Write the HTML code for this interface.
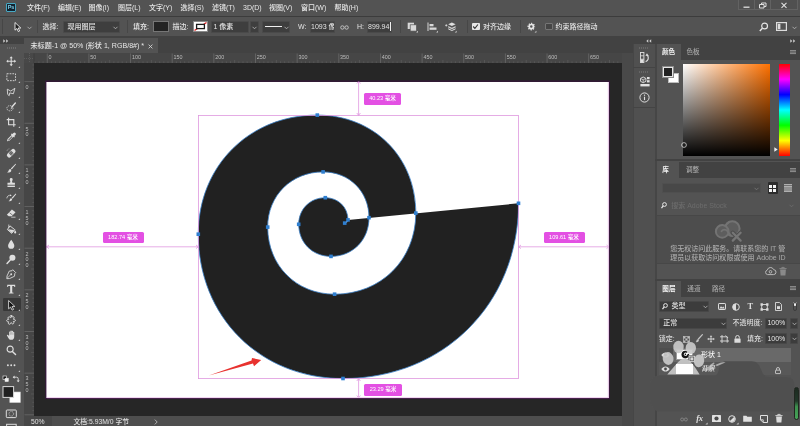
<!DOCTYPE html>
<html lang="zh-CN">
<head>
<meta charset="utf-8">
<title>Photoshop</title>
<style>
*{box-sizing:border-box;margin:0;padding:0}
html,body{width:800px;height:426px;overflow:hidden;background:#535353}
body{position:relative;font-family:"Liberation Sans","Noto Sans CJK SC",sans-serif;font-size:7px;color:#d6d6d6;line-height:1;font-weight:500}
.a{position:absolute}
.t{position:absolute;white-space:nowrap;line-height:10px;height:10px}
svg{position:absolute;overflow:visible}
.lab{height:11.5px;background:#e350e3;border-radius:1.5px;color:#fff;font-size:5.6px;line-height:11px;text-align:center;white-space:nowrap}
.m{top:2.5px;color:#e8e8e8}
.o{top:22px;color:#e4e4e4}
.fld{top:21px;height:11.5px;background:#3e3e3e;border:1px solid #4a4a4a;border-radius:1px}
.vs{top:20px;width:1px;height:13px;background:#474747}
.rl{font-size:5.4px;color:#bdbdbd;line-height:6px;height:6px}
</style>
</head>
<body>
<div id="root" style="position:absolute;left:0;top:0;width:800px;height:426px;opacity:0.999">
<!-- MENU BAR -->
<div class="a" id="menubar" style="left:0;top:0;width:800px;height:16px;background:#535353"></div>
<div class="a" style="left:0;top:16px;width:800px;height:1px;background:#3c3c3c"></div>
<!-- menu items -->
<div class="a" style="left:6px;top:3px;width:10px;height:9px;background:#12222f;border:1px solid #47a9c4;border-radius:1px;color:#7fd0ea;font-size:5.5px;line-height:7px;text-align:center;font-weight:bold;letter-spacing:-0.2px">Ps</div>
<div class="t m" style="left:27px">文件(F)</div>
<div class="t m" style="left:58px">编辑(E)</div>
<div class="t m" style="left:88.5px">图像(I)</div>
<div class="t m" style="left:118px">图层(L)</div>
<div class="t m" style="left:149px">文字(Y)</div>
<div class="t m" style="left:180.5px">选择(S)</div>
<div class="t m" style="left:212px">滤镜(T)</div>
<div class="t m" style="left:243px">3D(D)</div>
<div class="t m" style="left:269px">视图(V)</div>
<div class="t m" style="left:301px">窗口(W)</div>
<div class="t m" style="left:334.5px">帮助(H)</div>
<!-- window controls -->
<div class="a" style="left:738px;top:-1px;width:60px;height:11px;border:1px solid #626262;background:#505050"></div>
<div class="a" style="left:754px;top:0;width:1px;height:10px;background:#626262"></div>
<div class="a" style="left:770px;top:0;width:1px;height:10px;background:#626262"></div>
<svg width="60" height="11" style="left:738px;top:0" viewBox="738 0 60 11" fill="none" stroke="#e0e0e0" stroke-width="1">
<path d="M743.5 7.2h6" stroke-width="1.3"/>
<path d="M759.5 4.5h4.5v3.5h-4.5zM761.5 4.5v-1.5h4.5v3.5h-2"/>
<path d="M781.5 2.8l5 5M786.5 2.8l-5 5" stroke-width="1.1"/>
</svg>
<!-- OPTIONS BAR -->
<div class="a" id="optbar" style="left:0;top:17px;width:800px;height:19px;background:#535353"></div>
<!-- options bar content -->
<div class="a" style="left:2px;top:19px;width:1px;height:15px;background:#464646"></div>
<svg width="8" height="10" style="left:14px;top:22px" viewBox="0 0 8 10"><path d="M1 0.5V8.2L2.9 6.5L4.3 9.6L5.6 9L4.2 6L6.8 6Z" fill="#1c1c1c" stroke="#f2f2f2" stroke-width="0.9" stroke-linejoin="round"/></svg>
<svg width="5" height="4" style="left:27px;top:25.5px" viewBox="0 0 5 4"><path d="M0.5 0.8l2 2 2-2" fill="none" stroke="#bdbdbd" stroke-width="0.8"/></svg>
<div class="a vs" style="left:37px"></div>
<div class="t o" style="left:42.5px">选择:</div>
<div class="a fld" style="left:62.5px;width:57.5px"></div>
<div class="t o" style="left:67.5px">现用图层</div>
<svg width="5" height="4" style="left:113px;top:25.5px" viewBox="0 0 5 4"><path d="M0.5 0.8l2 2 2-2" fill="none" stroke="#bdbdbd" stroke-width="0.8"/></svg>
<div class="a vs" style="left:126.5px"></div>
<div class="t o" style="left:133px">填充:</div>
<div class="a" style="left:152.5px;top:20.5px;width:16px;height:11px;background:#232323;border:1px solid #767676"></div>
<div class="t o" style="left:172.5px">描边:</div>
<svg width="15" height="11" style="left:192.5px;top:20.5px" viewBox="0 0 15 11"><rect x="0.5" y="0.5" width="14" height="10" fill="#fff" stroke="#8a8a8a"/><path d="M1.5 9.5L13.5 1.5" stroke="#e02020" stroke-width="1.3"/><rect x="3.6" y="3.4" width="7.8" height="4.2" fill="#fff" stroke="#1c1c1c" stroke-width="1.3"/></svg>
<div class="a fld" style="left:211px;width:38px"></div>
<div class="t o" style="left:213.5px">1 像素</div>
<div class="a fld" style="left:250px;width:9px"></div>
<svg width="5" height="4" style="left:252px;top:25.5px" viewBox="0 0 5 4"><path d="M0.5 0.8l2 2 2-2" fill="none" stroke="#bdbdbd" stroke-width="0.8"/></svg>
<div class="a fld" style="left:262px;width:28px"></div>
<div class="a" style="left:264.5px;top:26px;width:17.5px;height:1.3px;background:#f0f0f0"></div>
<svg width="5" height="4" style="left:284px;top:25.5px" viewBox="0 0 5 4"><path d="M0.5 0.8l2 2 2-2" fill="none" stroke="#bdbdbd" stroke-width="0.8"/></svg>
<div class="t o" style="left:298px">W:</div>
<div class="a fld" style="left:309.5px;width:25px"></div>
<div class="t o" style="left:311px;width:23px;overflow:hidden">1093 像素</div>
<svg width="9" height="5" style="left:339.5px;top:24.5px" viewBox="0 0 9 5" fill="none" stroke="#c8c8c8" stroke-width="0.9"><circle cx="2.4" cy="2.5" r="1.7"/><circle cx="6.6" cy="2.5" r="1.7"/></svg>
<div class="t o" style="left:357px">H:</div>
<div class="a fld" style="left:367px;width:24.5px"></div>
<div class="t o" style="left:368px">899.94</div>
<div class="a" style="left:390px;top:22px;width:1px;height:9px;background:#f0f0f0"></div>
<div class="a vs" style="left:399.5px"></div>
<svg width="12" height="11" style="left:407px;top:21.5px" viewBox="0 0 12 11"><rect x="0.7" y="0.7" width="6.3" height="6.3" fill="#d8d8d8"/><rect x="3.2" y="2.8" width="6.3" height="6.3" fill="#d8d8d8" stroke="#535353" stroke-width="0.7"/><path d="M9.2 10.6h1.8v-1.8z" fill="#d8d8d8"/></svg>
<svg width="12" height="11" style="left:427px;top:21.5px" viewBox="0 0 12 11"><path d="M1 0.5v8.5" stroke="#d8d8d8" stroke-width="1"/><rect x="2.5" y="2" width="4" height="2.3" fill="#d8d8d8"/><rect x="2.5" y="5.5" width="7" height="2.3" fill="#d8d8d8"/><path d="M9.2 10.6h1.8v-1.8z" fill="#d8d8d8"/></svg>
<svg width="13" height="11" style="left:445px;top:21.5px" viewBox="0 0 13 11"><path d="M0.2 3.400h2.200M1.300 2.300v2.200" stroke="#e0e0e0" stroke-width="0.8"/><path d="M3.200 2.300l3.700-1.700 3.700 1.700-3.700 1.700z" fill="#e0e0e0"/><path d="M3.200 4.100l3.700 1.700 3.700-1.700v1.500l-3.700 1.700-3.700-1.700z" fill="#e0e0e0" opacity="0.85"/><path d="M3.200 6.800l3.700 1.700 3.700-1.700" fill="none" stroke="#e0e0e0" stroke-width="1"/><path d="M9.800 10.600h1.800v-1.800z" fill="#d8d8d8"/></svg>
<div class="a vs" style="left:467px"></div>
<div class="a" style="left:472px;top:22.5px;width:7.5px;height:7.5px;background:#e6e6e6;border-radius:1px"></div>
<svg width="7" height="7" style="left:472.3px;top:22.8px" viewBox="0 0 7 7"><path d="M1.2 3.5l1.7 1.8 3-3.8" fill="none" stroke="#333" stroke-width="1.1"/></svg>
<div class="t o" style="left:483px">对齐边缘</div>
<div class="a vs" style="left:519.5px"></div>
<svg width="10" height="11" style="left:527px;top:21.5px" viewBox="0 0 10 11"><circle cx="4.3" cy="4.6" r="3.1" fill="none" stroke="#e6e6e6" stroke-width="1.5" stroke-dasharray="1.22 1.215" stroke-dashoffset="0.6"/><circle cx="4.3" cy="4.6" r="2.1" fill="none" stroke="#e6e6e6" stroke-width="1.7"/><path d="M7.600 10.600h1.800v-1.800z" fill="#d8d8d8"/></svg>
<div class="a" style="left:545px;top:22.5px;width:7.5px;height:7.5px;background:#454545;border:1px solid #757575;border-radius:1px"></div>
<div class="t o" style="left:555.5px">约束路径拖动</div>
<svg width="10" height="10" style="left:759px;top:21.5px" viewBox="0 0 10 10" fill="none" stroke="#e4e4e4"><circle cx="5.6" cy="4" r="2.9" stroke-width="1.2"/><path d="M3.4 6.2L0.8 8.9" stroke-width="1.5"/></svg>
<svg width="11" height="9" style="left:776px;top:22px" viewBox="0 0 11 9"><rect x="0.6" y="0.6" width="9.8" height="7.8" fill="none" stroke="#dcdcdc" stroke-width="1.2"/><rect x="1.8" y="1.8" width="2.6" height="5.4" fill="#dcdcdc"/></svg>
<svg width="5" height="4" style="left:791.5px;top:25.5px" viewBox="0 0 5 4"><path d="M0.5 0.8l2 2 2-2" fill="none" stroke="#bdbdbd" stroke-width="0.8"/></svg>
<!-- dark band -->
<div class="a" style="left:0;top:36px;width:800px;height:8px;background:#424242"></div>
<!-- LEFT TOOLBAR -->
<div class="a" id="toolbar" style="left:0;top:43px;width:24px;height:383px;background:#535353"></div>
<!-- tools -->
<div class="a" style="left:0;top:36px;width:24px;height:8px;background:#424242"></div>
<svg width="6" height="4" style="left:2.5px;top:38.5px" viewBox="0 0 6 4"><path d="M0.3 0.3l2 1.7-2 1.7zM3.2 0.3l2 1.7-2 1.7z" fill="#d0d0d0"/></svg>
<div class="a" style="left:7px;top:47px;width:10px;height:2px;background:repeating-linear-gradient(90deg,#6a6a6a 0 1px,transparent 1px 2px)"></div>
<svg width="10.4" height="10.4" style="left:6px;top:56.3px" viewBox="0 0 12 12"><path d="M6 0.3l1.9 2.2h-1.3v2.9h2.9v-1.3l2.2 1.9-2.2 1.9v-1.3h-2.9v2.9h1.3l-1.9 2.2-1.9-2.2h1.3v-2.9h-2.9v1.3l-2.2-1.9 2.2-1.9v1.3h2.9v-2.9h-1.3z" fill="#dedede"/></svg>
<svg width="2.4" height="2.4" style="left:18px;top:65.5px" viewBox="0 0 3 3"><path d="M2.6 0.4v2.2h-2.2z" fill="#c4c4c4"/></svg>
<svg width="10.4" height="10.4" style="left:6px;top:71.5px" viewBox="0 0 12 12"><rect x="1" y="2" width="10" height="8" fill="none" stroke="#dedede" stroke-width="1" stroke-dasharray="2 1.2"/></svg>
<svg width="2.4" height="2.4" style="left:18px;top:80.7px" viewBox="0 0 3 3"><path d="M2.6 0.4v2.2h-2.2z" fill="#c4c4c4"/></svg>
<svg width="10.4" height="10.4" style="left:6px;top:86.7px" viewBox="0 0 12 12"><path d="M1.5 2.5l4 2.2 4.8-3.2-1.8 6.3-4.2-1 -0.6 3.2 -1.8-1.5z" fill="none" stroke="#dedede" stroke-width="1" stroke-linejoin="round"/></svg>
<svg width="2.4" height="2.4" style="left:18px;top:95.9px" viewBox="0 0 3 3"><path d="M2.6 0.4v2.2h-2.2z" fill="#c4c4c4"/></svg>
<svg width="10.4" height="10.4" style="left:6px;top:101.9px" viewBox="0 0 12 12"><ellipse cx="4.6" cy="7.2" rx="3.6" ry="3" fill="none" stroke="#dedede" stroke-width="0.9" stroke-dasharray="1.6 0.9"/><path d="M10.8 1.2l-4 4.6" stroke="#dedede" stroke-width="1.6" stroke-linecap="round"/><path d="M6.6 6l-1.6 2.6 2.6-1.6z" fill="#dedede"/></svg>
<svg width="2.4" height="2.4" style="left:18px;top:111.1px" viewBox="0 0 3 3"><path d="M2.6 0.4v2.2h-2.2z" fill="#c4c4c4"/></svg>
<svg width="10.4" height="10.4" style="left:6px;top:117.1px" viewBox="0 0 12 12"><path d="M3 0.8v8.2h8.2M0.8 3h8.2v8.2" fill="none" stroke="#dedede" stroke-width="1.3"/></svg>
<svg width="2.4" height="2.4" style="left:18px;top:126.3px" viewBox="0 0 3 3"><path d="M2.6 0.4v2.2h-2.2z" fill="#c4c4c4"/></svg>
<svg width="10.4" height="10.4" style="left:6px;top:132.3px" viewBox="0 0 12 12"><path d="M10.9 1.1a1.6 1.6 0 0 0-2.3 0l-1.3 1.3-0.7-0.7-1 1 0.8 0.8-4.6 4.6-0.6 2.4 0.3 0.3 2.4-0.6 4.6-4.6 0.8 0.8 1-1-0.7-0.7 1.3-1.3a1.6 1.6 0 0 0 0-2.3z" fill="#dedede"/><path d="M6.6 5l-3.9 3.9-0.3 1 1-0.3 3.9-3.9z" fill="#535353"/></svg>
<svg width="2.4" height="2.4" style="left:18px;top:141.5px" viewBox="0 0 3 3"><path d="M2.6 0.4v2.2h-2.2z" fill="#c4c4c4"/></svg>
<svg width="10.4" height="10.4" style="left:6px;top:147.5px" viewBox="0 0 12 12"><g transform="rotate(-45 6 6)"><rect x="0.2" y="3.4" width="11.6" height="5.2" rx="2.3" fill="#dedede"/><rect x="4" y="4" width="4" height="4" fill="#535353"/><circle cx="5.1" cy="5.1" r="0.5" fill="#dedede"/><circle cx="6.9" cy="5.1" r="0.5" fill="#dedede"/><circle cx="5.1" cy="6.9" r="0.5" fill="#dedede"/><circle cx="6.9" cy="6.9" r="0.5" fill="#dedede"/></g><path d="M1.2 3.5a3 3 0 0 1 3-2.6" fill="none" stroke="#dedede" stroke-width="0.6" stroke-dasharray="0.8 0.6"/></svg>
<svg width="2.4" height="2.4" style="left:18px;top:156.7px" viewBox="0 0 3 3"><path d="M2.6 0.4v2.2h-2.2z" fill="#c4c4c4"/></svg>
<svg width="10.4" height="10.4" style="left:6px;top:162.7px" viewBox="0 0 12 12"><path d="M11 0.8l-5.4 5.6 1 1 5-6z" fill="#dedede"/><path d="M5.1 6.9c-1.6 0.1-1.9 1.3-2.2 2.3-0.2 0.8-0.9 1.2-1.7 1.5 1.6 0.5 3.6 0.2 4.5-0.9 0.6-0.8 0.6-1.8-0.6-2.9z" fill="#dedede"/></svg>
<svg width="2.4" height="2.4" style="left:18px;top:171.9px" viewBox="0 0 3 3"><path d="M2.6 0.4v2.2h-2.2z" fill="#c4c4c4"/></svg>
<svg width="10.4" height="10.4" style="left:6px;top:177.9px" viewBox="0 0 12 12"><path d="M4.3 1.8a1.7 1.7 0 1 1 3.4 0c0 1-0.7 1.6-0.7 2.6 0 0.8 0.5 1.2 1.6 1.2h1.7v2.2h-8.6v-2.2h1.7c1.1 0 1.6-0.4 1.6-1.2 0-1-0.7-1.6-0.7-2.6z" fill="#dedede"/><rect x="1.7" y="8.8" width="8.6" height="1.6" fill="#dedede"/></svg>
<svg width="2.4" height="2.4" style="left:18px;top:187.1px" viewBox="0 0 3 3"><path d="M2.6 0.4v2.2h-2.2z" fill="#c4c4c4"/></svg>
<svg width="10.4" height="10.4" style="left:6px;top:193.1px" viewBox="0 0 12 12"><path d="M11.2 0.6l-4.6 5 0.9 0.9 4.3-5.2z" fill="#dedede"/><path d="M6.2 6c-1.4 0.1-1.7 1.1-1.9 2-0.2 0.7-0.8 1.1-1.5 1.3 1.4 0.4 3.1 0.2 3.9-0.8 0.6-0.7 0.5-1.6-0.5-2.5z" fill="#dedede"/><path d="M1 6.2a3.4 3.4 0 0 1 4.6-3.3" fill="none" stroke="#dedede" stroke-width="0.9"/><path d="M5 1.5l1.6 1.7-2.2 0.6z" fill="#dedede"/></svg>
<svg width="2.4" height="2.4" style="left:18px;top:202.3px" viewBox="0 0 3 3"><path d="M2.6 0.4v2.2h-2.2z" fill="#c4c4c4"/></svg>
<svg width="10.4" height="10.4" style="left:6px;top:208.3px" viewBox="0 0 12 12"><path d="M6.8 1.6l4.2 3.2-4.4 4.8h-3.4l-2.2-1.7z" fill="#dedede"/><path d="M4.2 5.6l3.6 2.8" stroke="#535353" stroke-width="0.8"/><path d="M6 10.6h5" stroke="#dedede" stroke-width="0.9"/></svg>
<svg width="2.4" height="2.4" style="left:18px;top:217.5px" viewBox="0 0 3 3"><path d="M2.6 0.4v2.2h-2.2z" fill="#c4c4c4"/></svg>
<svg width="10.4" height="10.4" style="left:6px;top:223.5px" viewBox="0 0 12 12"><path d="M4.6 2.2l5.6 4.4-3.6 4.2-5-4.4z" fill="none" stroke="#dedede" stroke-width="1.1" stroke-linejoin="round"/><path d="M2.2 6.2l7.4 0.6-3 3.6z" fill="#dedede"/><path d="M3.2 0.6v4.2" stroke="#dedede" stroke-width="0.9"/><path d="M10.6 7.2c0.8 1.3 1.2 2 1.2 2.7a1.2 1.2 0 0 1-2.4 0c0-0.7 0.4-1.4 1.2-2.7z" fill="#dedede"/></svg>
<svg width="2.4" height="2.4" style="left:18px;top:232.7px" viewBox="0 0 3 3"><path d="M2.6 0.4v2.2h-2.2z" fill="#c4c4c4"/></svg>
<svg width="10.4" height="10.4" style="left:6px;top:238.7px" viewBox="0 0 12 12"><path d="M6 0.8c2.2 3.2 3.6 5 3.6 6.9a3.6 3.6 0 0 1-7.2 0c0-1.9 1.4-3.7 3.6-6.9z" fill="#dedede"/></svg>
<svg width="2.4" height="2.4" style="left:18px;top:247.9px" viewBox="0 0 3 3"><path d="M2.6 0.4v2.2h-2.2z" fill="#c4c4c4"/></svg>
<svg width="10.4" height="10.4" style="left:6px;top:253.9px" viewBox="0 0 12 12"><circle cx="7.4" cy="4.3" r="3.5" fill="#dedede"/><path d="M4.9 6.9l-3.7 4" stroke="#dedede" stroke-width="1.7" stroke-linecap="round"/></svg>
<svg width="2.4" height="2.4" style="left:18px;top:263.1px" viewBox="0 0 3 3"><path d="M2.6 0.4v2.2h-2.2z" fill="#c4c4c4"/></svg>
<svg width="10.4" height="10.4" style="left:6px;top:269.1px" viewBox="0 0 12 12"><path d="M7.8 0.8l3.4 3.4-1 1-0.4 3.2-5.6 2.6-3.2 0.2 0.2-3.2 2.6-5.6 3.2-0.4z" fill="none" stroke="#dedede" stroke-width="1" stroke-linejoin="round"/><path d="M1.2 10.8l4.2-4.2" stroke="#dedede" stroke-width="0.8"/><circle cx="6" cy="6" r="1.1" fill="#dedede"/></svg>
<svg width="2.4" height="2.4" style="left:18px;top:278.3px" viewBox="0 0 3 3"><path d="M2.6 0.4v2.2h-2.2z" fill="#c4c4c4"/></svg>
<svg width="10.4" height="10.4" style="left:6px;top:284.3px" viewBox="0 0 12 12"><path d="M1.4 1h9.2v2.6h-0.9l-0.4-1.3h-2.1v7.6l1.5 0.3v0.8h-5.4v-0.8l1.5-0.3v-7.6h-2.1l-0.4 1.3h-0.9z" fill="#dedede"/></svg>
<svg width="2.4" height="2.4" style="left:18px;top:293.5px" viewBox="0 0 3 3"><path d="M2.6 0.4v2.2h-2.2z" fill="#c4c4c4"/></svg>
<div class="a" style="left:2.5px;top:297.9px;width:18px;height:13.5px;background:#383838;border-radius:1px"></div>
<svg width="10.4" height="10.4" style="left:6px;top:299.5px" viewBox="0 0 12 12"><path d="M3 0.6v9.6l2.3-2.1 1.7 3.6 1.7-0.8-1.7-3.5h3.2z" fill="#111" stroke="#f0f0f0" stroke-width="0.9" stroke-linejoin="round"/></svg>
<svg width="2.4" height="2.4" style="left:18px;top:308.7px" viewBox="0 0 3 3"><path d="M2.6 0.4v2.2h-2.2z" fill="#c4c4c4"/></svg>
<svg width="10.4" height="10.4" style="left:6px;top:314.7px" viewBox="0 0 12 12"><path d="M5.2 0.8c1 0 1.4 0.9 1.4 1.7 0.8-0.7 2-0.9 2.6-0.1 0.6 0.8 0 1.8-0.8 2.4 1.1 0 2.4 0.4 2.4 1.5 0 1-1.2 1.3-2.3 1.2 0.6 0.8 0.9 2-0.1 2.6-1 0.6-1.9-0.3-2.4-1.3-0.4 1-1.3 2.2-2.5 1.8-1.1-0.4-0.9-1.7-0.3-2.7-1 0.1-2.3-0.2-2.4-1.3-0.1-1.1 1.2-1.6 2.3-1.5-0.7-0.8-1.1-2-0.3-2.7 0.8-0.7 1.8-0.1 2.5 0.7 0-1 0.5-2.3 1.9-2.3z" fill="none" stroke="#dedede" stroke-width="1.1" stroke-linejoin="round"/></svg>
<svg width="2.4" height="2.4" style="left:18px;top:323.9px" viewBox="0 0 3 3"><path d="M2.6 0.4v2.2h-2.2z" fill="#c4c4c4"/></svg>
<svg width="10.4" height="10.4" style="left:6px;top:329.9px" viewBox="0 0 12 12"><path d="M3.6 6.6v-4.2a0.75 0.75 0 0 1 1.5 0v-1a0.75 0.75 0 0 1 1.5 0v0.3a0.75 0.75 0 0 1 1.5 0v1a0.7 0.7 0 0 1 1.4 0v5c0 2.2-1.2 3.6-3.4 3.6-1.8 0-2.6-0.8-3.4-2.2l-1.6-2.8c-0.3-0.6 0.5-1.1 1-0.6z" fill="#dedede"/><path d="M5.1 2.5v3M6.6 1.8v3.6M8.1 2.8v2.8" stroke="#535353" stroke-width="0.35"/></svg>
<svg width="2.4" height="2.4" style="left:18px;top:339.1px" viewBox="0 0 3 3"><path d="M2.6 0.4v2.2h-2.2z" fill="#c4c4c4"/></svg>
<svg width="10.4" height="10.4" style="left:6px;top:345.1px" viewBox="0 0 12 12"><circle cx="4.8" cy="4.8" r="3.5" fill="none" stroke="#dedede" stroke-width="1.3"/><path d="M7.4 7.4l3.6 3.6" stroke="#dedede" stroke-width="1.7" stroke-linecap="round"/></svg>
<svg width="10.4" height="10.4" style="left:6px;top:360.3px" viewBox="0 0 12 12"><circle cx="2.2" cy="6" r="1.1" fill="#dedede"/><circle cx="6" cy="6" r="1.1" fill="#dedede"/><circle cx="9.8" cy="6" r="1.1" fill="#dedede"/></svg>
<svg width="2.4" height="2.4" style="left:18px;top:369.5px" viewBox="0 0 3 3"><path d="M2.6 0.4v2.2h-2.2z" fill="#c4c4c4"/></svg>
<svg width="24" height="52" style="left:0;top:374px" viewBox="0 374 24 52">
<rect x="3" y="376" width="3.6" height="3.6" fill="#111" stroke="#e6e6e6" stroke-width="0.7"/><rect x="5" y="378.2" width="3.4" height="3.4" fill="#f2f2f2" stroke="#e6e6e6" stroke-width="0.5"/>
<path d="M13.4 377.2h3.2a1.6 1.6 0 0 1 1.6 1.6v2.4" fill="none" stroke="#e0e0e0" stroke-width="0.9"/><path d="M14.6 375.6l-1.9 1.6 1.9 1.6zM16.6 380.4l1.6 1.9 1.6-1.9z" fill="#e0e0e0"/>
<rect x="9.8" y="392" width="10.6" height="10.6" fill="#fff" stroke="#c9c9c9" stroke-width="0.6"/>
<rect x="3" y="386.6" width="10.6" height="10.8" fill="#202020" stroke="#d9d9d9" stroke-width="1"/>
<rect x="6.3" y="410" width="10" height="7.6" rx="0.8" fill="none" stroke="#dcdcdc" stroke-width="1"/><circle cx="11.3" cy="413.8" r="2.3" fill="none" stroke="#dcdcdc" stroke-width="0.7" stroke-dasharray="0.9 0.6"/>
<rect x="6.6" y="424.3" width="9.6" height="3" fill="none" stroke="#dcdcdc" stroke-width="1"/>
</svg>
<!-- DOC AREA -->
<div class="a" id="docarea" style="left:24px;top:38px;width:609px;height:388px;background:#424242"></div>
<div class="a" id="tab" style="left:24px;top:38px;width:134px;height:15px;background:#535353"></div>
<div class="a" id="hruler" style="left:24px;top:53px;width:598px;height:10px;background:#464646"></div>
<div class="a" id="vruler" style="left:24px;top:63px;width:10px;height:353px;background:#464646"></div>
<div class="a" id="surround" style="left:34px;top:63px;width:588px;height:353px;background:#262626"></div>
<div class="a" id="canvas" style="left:46.4px;top:81.6px;width:562.4px;height:316.5px;background:#fff"></div>
<!-- CANVAS GRAPHICS -->
<svg id="art" width="800" height="426" viewBox="0 0 800 426" style="left:0;top:0">
<path fill="#212121" fill-rule="evenodd" d="M518.5 203.3 C518.5 303.7 443.6 378.5 343.0 378.5 C260.1 378.5 198.3 316.9 198.3 234.2 C198.3 166.0 249.1 115.1 317.3 115.1 C373.7 115.1 415.8 156.9 415.8 213.1 C415.8 259.6 381.1 294.2 334.6 294.2 C296.3 294.2 267.7 265.5 267.7 227.1 C267.7 195.5 291.4 171.9 323.1 171.9 C349.4 171.9 369.0 191.5 369.0 217.7 C369.0 239.9 352.8 256.4 331.0 256.4 C312.5 256.4 298.7 242.7 298.7 224.3 C298.7 209.1 310.1 197.7 325.3 197.7 C338.3 197.7 348.0 207.2 348.0 219.9 C348.0 221.7 346.6 223.1 344.7 223.1 L348 219.9Z"/><path fill="none" stroke="#3a7fc6" stroke-width="0.8" d="M518.5 203.3 C518.5 303.7 443.6 378.5 343.0 378.5 C260.1 378.5 198.3 316.9 198.3 234.2 C198.3 166.0 249.1 115.1 317.3 115.1 C373.7 115.1 415.8 156.9 415.8 213.1 C415.8 259.6 381.1 294.2 334.6 294.2 C296.3 294.2 267.7 265.5 267.7 227.1 C267.7 195.5 291.4 171.9 323.1 171.9 C349.4 171.9 369.0 191.5 369.0 217.7 C369.0 239.9 352.8 256.4 331.0 256.4 C312.5 256.4 298.7 242.7 298.7 224.3 C298.7 209.1 310.1 197.7 325.3 197.7 C338.3 197.7 348.0 207.2 348.0 219.9 C348.0 221.7 346.6 223.1 344.7 223.1"/>
<g fill="none" stroke="#df98df" stroke-width="0.8">
<rect x="198.4" y="115.4" width="320.2" height="263.2"/>
<path d="M46.5 246.8H198.4M518.6 246.8H609M358.6 81V115.4M358.6 378.6V398"/>
<path d="M49 245l-2.5 1.8 2.5 1.8M196 245l2.4 1.8-2.4 1.8M521 245l-2.4 1.8 2.4 1.8M606.5 245l2.4 1.8-2.4 1.8M356.8 83.5l1.8-2.5 1.8 2.5M356.8 113l1.8 2.4 1.8-2.4M356.8 381l1.8-2.4 1.8 2.4M356.8 395.5l1.8 2.4 1.8-2.4"/>
</g>
<rect x="45.9" y="81.1" width="563.4" height="317.5" fill="none" stroke="#3b1542" stroke-width="1"/><path d="M608.3 82v315.600H47" fill="none" stroke="#ecc9ec" stroke-width="0.9"/>
<g fill="#2f7fd0"><rect x="516.7" y="201.5" width="3.6" height="3.6"/><rect x="341.2" y="376.7" width="3.6" height="3.6"/><rect x="196.5" y="232.4" width="3.6" height="3.6"/><rect x="315.5" y="113.3" width="3.6" height="3.6"/><rect x="414.0" y="211.3" width="3.6" height="3.6"/><rect x="332.8" y="292.4" width="3.6" height="3.6"/><rect x="265.9" y="225.3" width="3.6" height="3.6"/><rect x="321.3" y="170.1" width="3.6" height="3.6"/><rect x="367.2" y="215.9" width="3.6" height="3.6"/><rect x="329.2" y="254.6" width="3.6" height="3.6"/><rect x="296.9" y="222.5" width="3.6" height="3.6"/><rect x="323.5" y="195.9" width="3.6" height="3.6"/><rect x="346.2" y="218.1" width="3.6" height="3.6"/><rect x="342.9" y="221.3" width="3.6" height="3.6"/></g>
<path d="M208.8 375.6L251.5 360.6L252 358L261.2 360L254 366.3L253 363.6Z" fill="#e8322f"/>
</svg>
<div class="a lab" style="left:364px;top:93px;width:37px">40.23 毫米</div>
<div class="a lab" style="left:102.5px;top:231.5px;width:41px">182.74 毫米</div>
<div class="a lab" style="left:543.5px;top:231.5px;width:41px">109.61 毫米</div>
<div class="a lab" style="left:364px;top:384px;width:38px">23.29 毫米</div>
<div class="a" id="statusbar" style="left:24px;top:416px;width:598px;height:10px;background:#4e4e4e"></div>
<!-- rulers -->
<svg width="598" height="10" style="left:24px;top:53px" viewBox="24 53 598 10"><rect x="24" y="53" width="10" height="10" fill="#484848"/><path d="M24 58.5h10M29.5 53v10" stroke="#6a6a6a" stroke-width="0.6" stroke-dasharray="1 1"/><path d="M47.25 53.5V63M88.90 53.5V63M130.55 53.5V63M172.20 53.5V63M213.85 53.5V63M255.50 53.5V63M297.15 53.5V63M338.80 53.5V63M380.45 53.5V63M422.10 53.5V63M463.75 53.5V63M505.40 53.5V63M547.05 53.5V63M588.70 53.5V63" stroke="#6f6f6f" stroke-width="0.7"/><path d="M34.76 61.3V63M38.92 61.3V63M43.09 61.3V63M51.41 61.3V63M55.58 61.3V63M59.74 61.3V63M63.91 61.3V63M68.08 60V63M72.24 61.3V63M76.41 61.3V63M80.57 61.3V63M84.73 61.3V63M93.06 61.3V63M97.23 61.3V63M101.39 61.3V63M105.56 61.3V63M109.72 60V63M113.89 61.3V63M118.05 61.3V63M122.22 61.3V63M126.39 61.3V63M134.72 61.3V63M138.88 61.3V63M143.04 61.3V63M147.21 61.3V63M151.38 60V63M155.54 61.3V63M159.70 61.3V63M163.87 61.3V63M168.03 61.3V63M176.36 61.3V63M180.53 61.3V63M184.69 61.3V63M188.86 61.3V63M193.03 60V63M197.19 61.3V63M201.35 61.3V63M205.52 61.3V63M209.69 61.3V63M218.01 61.3V63M222.18 61.3V63M226.34 61.3V63M230.51 61.3V63M234.68 60V63M238.84 61.3V63M243.00 61.3V63M247.17 61.3V63M251.33 61.3V63M259.67 61.3V63M263.83 61.3V63M268.00 61.3V63M272.16 61.3V63M276.32 60V63M280.49 61.3V63M284.65 61.3V63M288.82 61.3V63M292.99 61.3V63M301.31 61.3V63M305.48 61.3V63M309.64 61.3V63M313.81 61.3V63M317.98 60V63M322.14 61.3V63M326.30 61.3V63M330.47 61.3V63M334.63 61.3V63M342.97 61.3V63M347.13 61.3V63M351.29 61.3V63M355.46 61.3V63M359.62 60V63M363.79 61.3V63M367.95 61.3V63M372.12 61.3V63M376.28 61.3V63M384.62 61.3V63M388.78 61.3V63M392.94 61.3V63M397.11 61.3V63M401.27 60V63M405.44 61.3V63M409.60 61.3V63M413.77 61.3V63M417.94 61.3V63M426.26 61.3V63M430.43 61.3V63M434.59 61.3V63M438.76 61.3V63M442.93 60V63M447.09 61.3V63M451.25 61.3V63M455.42 61.3V63M459.58 61.3V63M467.91 61.3V63M472.08 61.3V63M476.25 61.3V63M480.41 61.3V63M484.57 60V63M488.74 61.3V63M492.91 61.3V63M497.07 61.3V63M501.23 61.3V63M509.56 61.3V63M513.73 61.3V63M517.89 61.3V63M522.06 61.3V63M526.23 60V63M530.39 61.3V63M534.56 61.3V63M538.72 61.3V63M542.88 61.3V63M551.21 61.3V63M555.38 61.3V63M559.54 61.3V63M563.71 61.3V63M567.88 60V63M572.04 61.3V63M576.21 61.3V63M580.37 61.3V63M584.53 61.3V63M592.87 61.3V63M597.03 61.3V63M601.19 61.3V63M605.36 61.3V63M609.52 60V63M613.69 61.3V63M617.86 61.3V63" stroke="#626262" stroke-width="0.6"/><path d="M34 53.5v9.5" stroke="#3a3a3a" stroke-width="0.8"/></svg>
<div class="t rl" style="left:48.5px;top:54px">0</div>
<div class="t rl" style="left:90.2px;top:54px">50</div>
<div class="t rl" style="left:131.9px;top:54px">100</div>
<div class="t rl" style="left:173.5px;top:54px">150</div>
<div class="t rl" style="left:215.2px;top:54px">200</div>
<div class="t rl" style="left:256.8px;top:54px">250</div>
<div class="t rl" style="left:298.4px;top:54px">300</div>
<div class="t rl" style="left:340.1px;top:54px">350</div>
<div class="t rl" style="left:381.8px;top:54px">400</div>
<div class="t rl" style="left:423.4px;top:54px">450</div>
<div class="t rl" style="left:465.1px;top:54px">500</div>
<div class="t rl" style="left:506.7px;top:54px">550</div>
<div class="t rl" style="left:548.3px;top:54px">600</div>
<div class="t rl" style="left:590.0px;top:54px">650</div>
<svg width="10" height="354" style="left:24px;top:63px" viewBox="24 63 10 354"><path d="M24.5 81.60H34M24.5 123.25H34M24.5 164.90H34M24.5 206.55H34M24.5 248.20H34M24.5 289.85H34M24.5 331.50H34M24.5 373.15H34M24.5 414.80H34" stroke="#6f6f6f" stroke-width="0.7"/><path d="M32.3 64.94H34M32.3 69.10H34M32.3 73.27H34M32.3 77.43H34M32.3 85.77H34M32.3 89.93H34M32.3 94.09H34M32.3 98.26H34M31 102.42H34M32.3 106.59H34M32.3 110.75H34M32.3 114.92H34M32.3 119.08H34M32.3 127.41H34M32.3 131.58H34M32.3 135.75H34M32.3 139.91H34M31 144.07H34M32.3 148.24H34M32.3 152.40H34M32.3 156.57H34M32.3 160.74H34M32.3 169.06H34M32.3 173.23H34M32.3 177.39H34M32.3 181.56H34M31 185.72H34M32.3 189.89H34M32.3 194.06H34M32.3 198.22H34M32.3 202.38H34M32.3 210.71H34M32.3 214.88H34M32.3 219.04H34M32.3 223.21H34M31 227.38H34M32.3 231.54H34M32.3 235.70H34M32.3 239.87H34M32.3 244.03H34M32.3 252.36H34M32.3 256.53H34M32.3 260.69H34M32.3 264.86H34M31 269.02H34M32.3 273.19H34M32.3 277.36H34M32.3 281.52H34M32.3 285.68H34M32.3 294.01H34M32.3 298.18H34M32.3 302.34H34M32.3 306.51H34M31 310.67H34M32.3 314.84H34M32.3 319.00H34M32.3 323.17H34M32.3 327.33H34M32.3 335.66H34M32.3 339.83H34M32.3 344.00H34M32.3 348.16H34M31 352.33H34M32.3 356.49H34M32.3 360.65H34M32.3 364.82H34M32.3 368.99H34M32.3 377.32H34M32.3 381.48H34M32.3 385.64H34M32.3 389.81H34M31 393.98H34M32.3 398.14H34M32.3 402.30H34M32.3 406.47H34M32.3 410.63H34" stroke="#626262" stroke-width="0.6"/></svg>
<div class="t rl" style="left:25.1px;width:4px;text-align:center;top:83.9px">0</div>
<div class="t rl" style="left:25.1px;width:4px;text-align:center;top:125.6px">5</div>
<div class="t rl" style="left:25.1px;width:4px;text-align:center;top:131.2px">0</div>
<div class="t rl" style="left:25.1px;width:4px;text-align:center;top:167.2px">1</div>
<div class="t rl" style="left:25.1px;width:4px;text-align:center;top:172.9px">0</div>
<div class="t rl" style="left:25.1px;width:4px;text-align:center;top:178.6px">0</div>
<div class="t rl" style="left:25.1px;width:4px;text-align:center;top:208.8px">1</div>
<div class="t rl" style="left:25.1px;width:4px;text-align:center;top:214.5px">5</div>
<div class="t rl" style="left:25.1px;width:4px;text-align:center;top:220.2px">0</div>
<div class="t rl" style="left:25.1px;width:4px;text-align:center;top:250.5px">2</div>
<div class="t rl" style="left:25.1px;width:4px;text-align:center;top:256.2px">0</div>
<div class="t rl" style="left:25.1px;width:4px;text-align:center;top:261.9px">0</div>
<div class="t rl" style="left:25.1px;width:4px;text-align:center;top:292.2px">2</div>
<div class="t rl" style="left:25.1px;width:4px;text-align:center;top:297.9px">5</div>
<div class="t rl" style="left:25.1px;width:4px;text-align:center;top:303.6px">0</div>
<div class="t rl" style="left:25.1px;width:4px;text-align:center;top:333.8px">3</div>
<div class="t rl" style="left:25.1px;width:4px;text-align:center;top:339.5px">0</div>
<div class="t rl" style="left:25.1px;width:4px;text-align:center;top:345.2px">0</div>
<div class="t rl" style="left:25.1px;width:4px;text-align:center;top:375.4px">3</div>
<div class="t rl" style="left:25.1px;width:4px;text-align:center;top:381.1px">5</div>
<div class="t rl" style="left:25.1px;width:4px;text-align:center;top:386.8px">0</div>
<div class="t" style="left:30.5px;top:40.5px;color:#e6e6e6;font-size:7.1px">未标题-1 @ 50% (形状 1, RGB/8#) *</div>
<svg width="5" height="5" style="left:147.5px;top:43.5px" viewBox="0 0 5 5"><path d="M0.6 0.6l3.8 3.8M4.4 0.6L0.6 4.4" stroke="#d0d0d0" stroke-width="0.9"/></svg>
<div class="a" style="left:24px;top:416px;width:28px;height:10px;background:#474747"></div>
<div class="t" style="left:31px;top:417px;color:#e0e0e0;font-size:6.8px">50%</div>
<div class="t" style="left:73.5px;top:417px;color:#e0e0e0;font-size:6.8px">文档:5.93M/0 字节</div>
<svg width="4" height="6" style="left:153.5px;top:419px" viewBox="0 0 4 6"><path d="M0.8 0.6l2.4 2.4-2.4 2.4" fill="none" stroke="#c8c8c8" stroke-width="0.8"/></svg>
<!-- RIGHT STRIP -->
<div class="a" style="left:622px;top:53px;width:11px;height:373px;background:#494949"></div>
<div class="a" id="strip" style="left:633px;top:44px;width:22px;height:382px;background:#505050;border-left:1px solid #464646"></div>
<div class="a" style="left:655px;top:44px;width:2px;height:382px;background:#464646"></div>
<!-- RIGHT PANELS -->
<div class="a" id="rpanel" style="left:657px;top:44px;width:143px;height:382px;background:#535353"></div>
<!-- strip contents -->
<svg width="6" height="4" style="left:646px;top:38.5px" viewBox="0 0 6 4"><path d="M2.3 0.3l-2 1.7 2 1.7zM5.2 0.3l-2 1.7 2 1.7z" fill="#d0d0d0"/></svg>
<svg width="6" height="4" style="left:790px;top:38.5px" viewBox="0 0 6 4"><path d="M0.3 0.3l2 1.7-2 1.7zM3.2 0.3l2 1.7-2 1.7z" fill="#d0d0d0"/></svg>
<div class="a" style="left:639px;top:46.5px;width:10px;height:2px;background:repeating-linear-gradient(90deg,#666 0 1px,transparent 1px 2px)"></div>
<div class="a" style="left:633px;top:67px;width:22px;height:1.2px;background:#444"></div>
<div class="a" style="left:639px;top:70.5px;width:10px;height:2px;background:repeating-linear-gradient(90deg,#666 0 1px,transparent 1px 2px)"></div>
<div class="a" style="left:633px;top:107px;width:22px;height:1.2px;background:#444"></div>
<svg width="10" height="11" style="left:640px;top:52px" viewBox="0 0 10 11"><rect x="0.5" y="0.5" width="3.4" height="10" fill="none" stroke="#e0e0e0" stroke-width="0.9"/><path d="M0.5 3.8h3.4M0.5 7.2h3.4" stroke="#e0e0e0" stroke-width="0.8"/><rect x="0.9" y="7.4" width="2.6" height="2.8" fill="#e0e0e0"/><path d="M5.6 9.6c2.6-0.8 3.6-3.6 1.8-6.6" fill="none" stroke="#e0e0e0" stroke-width="1.2"/><path d="M5.4 3.8l1.6-2.6 1.7 2.9z" fill="#e0e0e0"/></svg>
<svg width="10" height="11" style="left:640px;top:76px" viewBox="0 0 10 11"><path d="M3.2 1l2.7 1.4v2.9l-2.7 1.4-2.7-1.4v-2.9z" fill="none" stroke="#e0e0e0" stroke-width="0.9"/><path d="M0.6 2.5l2.6 1.3 2.6-1.3M3.2 3.8v2.8" fill="none" stroke="#e0e0e0" stroke-width="0.7"/><rect x="7" y="1" width="2.6" height="2.2" fill="#e0e0e0"/><rect x="7" y="4.2" width="2.6" height="2.2" fill="#e0e0e0"/><rect x="0.4" y="8" width="9.2" height="2.4" fill="#e0e0e0"/></svg>
<svg width="11" height="11" style="left:638.5px;top:92.3px" viewBox="0 0 11 11"><circle cx="5.5" cy="5.5" r="4.6" fill="none" stroke="#e0e0e0" stroke-width="1"/><path d="M5.5 4.7v3.4" stroke="#e0e0e0" stroke-width="1.1"/><circle cx="5.5" cy="3.2" r="0.65" fill="#e0e0e0"/></svg>
<!-- color panel -->
<div class="a" style="left:657px;top:44px;width:143px;height:15.5px;background:#424242"></div>
<div class="a" style="left:657px;top:44px;width:23.5px;height:16px;background:#535353"></div>
<div class="t" style="left:662px;top:47px;color:#f2f2f2;font-weight:bold;font-size:6.6px">颜色</div>
<div class="t" style="left:686.5px;top:47px;color:#a6a6a6;font-size:6.6px">色板</div>
<svg width="6" height="5" style="left:790px;top:50px" viewBox="0 0 6 5"><path d="M0 0.6h6M0 2.1h6M0 3.6h6" stroke="#9a9a9a" stroke-width="0.9"/></svg>
<div class="a" style="left:668px;top:72.8px;width:11.3px;height:10.4px;background:#fff;border:0.6px solid #bdbdbd"></div>
<div class="a" style="left:661.6px;top:65.8px;width:12.6px;height:12.2px;border:1px solid #8c8c8c;background:#e6e6e6;padding:1px"><div style="width:100%;height:100%;background:#222"></div></div>
<div class="a" style="left:683px;top:64px;width:86.6px;height:92px;background:linear-gradient(to bottom,rgba(0,0,0,0) 0%,#000 100%),linear-gradient(to right,#fff 0%,#ff7100 100%)"></div>
<svg width="6" height="6" style="left:680.8px;top:141.8px" viewBox="0 0 6 6"><circle cx="3" cy="3" r="2.4" fill="none" stroke="#e8e8e8" stroke-width="0.7"/></svg>
<div class="a" style="left:778.6px;top:64px;width:11.4px;height:92px;background:linear-gradient(to bottom,#ff0000 0%,#ff00ff 16.6%,#0000ff 33.3%,#00ffff 50%,#00ff00 66.6%,#ffff00 83.3%,#ff0000 100%)"></div>
<svg width="4" height="5" style="left:774px;top:146.8px" viewBox="0 0 4 5"><path d="M0.3 0.3l3.4 2.2-3.4 2.2z" fill="#f0f0f0"/></svg>
<div class="a" style="left:655px;top:159.3px;width:145px;height:2.2px;background:#424242"></div>
<!-- library panel -->
<div class="a" style="left:657px;top:161.5px;width:143px;height:16.5px;background:#424242"></div>
<div class="a" style="left:657px;top:161.5px;width:22px;height:17px;background:#535353"></div>
<div class="t" style="left:662.3px;top:165px;color:#f2f2f2;font-weight:bold;font-size:6.6px">库</div>
<div class="t" style="left:686px;top:165px;color:#a6a6a6;font-size:6.6px">调整</div>
<svg width="6" height="5" style="left:790px;top:167.5px" viewBox="0 0 6 5"><path d="M0 0.6h6M0 2.1h6M0 3.6h6" stroke="#9a9a9a" stroke-width="0.9"/></svg>
<div class="a" style="left:662.3px;top:182.8px;width:98.6px;height:10.6px;background:#484848;border:1px solid #4f4f4f;border-radius:1px"></div>
<svg width="5" height="4" style="left:754px;top:186.5px" viewBox="0 0 5 4"><path d="M0.5 0.8l2 2 2-2" fill="none" stroke="#7a7a7a" stroke-width="0.8"/></svg>
<div class="a" style="left:767.5px;top:182.2px;width:10.8px;height:11.8px;background:#2c2c2c;border-radius:1px"></div>
<svg width="7" height="7" style="left:769.4px;top:184.6px" viewBox="0 0 7 7"><path d="M0 0h3v3h-3zM4 0h3v3h-3zM0 4h3v3h-3zM4 4h3v3h-3z" fill="#f4f4f4"/></svg>
<svg width="8" height="8" style="left:783.5px;top:184.2px" viewBox="0 0 8 8"><path d="M0 0.8h8M0 2.9h8M0 5h8M0 7.1h8" stroke="#cfcfcf" stroke-width="1.1"/></svg>
<svg width="6" height="7" style="left:661.2px;top:202.3px" viewBox="0 0 6 7"><circle cx="3.5" cy="2.5" r="1.9" fill="none" stroke="#e6e6e6" stroke-width="1"/><path d="M2.2 3.9L0.5 6.2" stroke="#e6e6e6" stroke-width="1.2"/></svg>
<div class="t" style="left:671.2px;top:200.6px;color:#6c6c6c">搜索 Adobe Stock</div>
<svg width="5" height="4" style="left:788.5px;top:204px" viewBox="0 0 5 4"><path d="M0.5 0.8l2 2 2-2" fill="none" stroke="#6f6f6f" stroke-width="0.8"/></svg>
<div class="a" style="left:657px;top:214.6px;width:143px;height:1px;background:#474747"></div>
<div class="a" style="left:657px;top:215.6px;width:143px;height:47.6px;background:#4d4d4d"></div>
<svg width="30" height="22" style="left:713px;top:220px" viewBox="0 0 30 22" fill="none" stroke="#737373" stroke-width="2" stroke-linecap="round"><circle cx="19.3" cy="8.600" r="7.300" fill="#5d5d5d"/><circle cx="9.200" cy="11.400" r="6.300" fill="#5d5d5d"/><path d="M12.500 5.800a7.300 7.300 0 0 1 3.300-3.600" /><path d="M8.500 11.200c1.500-2.200 4.500-2.200 6 0l3.500 4.600" stroke-width="1.800"/><path d="M19.800 12.800l7.800 7.800M27.600 12.800l-7.800 7.800" stroke="#4d4d4d" stroke-width="4.200"/><path d="M19.800 12.800l7.800 7.800M27.600 12.800l-7.800 7.800" stroke="#767676" stroke-width="2.300"/></svg>
<div class="t" style="left:670.2px;top:243.5px;color:#a9a9a9;width:115px;text-align:justify;text-align-last:justify">您无权访问此服务。请联系您的 IT 管</div>
<div class="t" style="left:670.2px;top:252.8px;color:#a9a9a9;width:115.5px;text-align:justify;text-align-last:justify">理员以获取访问权限或使用 Adobe ID</div>
<div class="a" style="left:657px;top:263.2px;width:143px;height:1px;background:#474747"></div>
<svg width="11" height="9" style="left:764.5px;top:267.2px" viewBox="0 0 11 9" fill="none" stroke="#b8b8b8" stroke-width="1"><path d="M2.6 7.6a2.3 2.3 0 0 1-0.3-4.5a3.3 3.3 0 0 1 6.3-0.5a2.5 2.5 0 0 1-0.2 5z"/><circle cx="5.5" cy="4.8" r="1.3"/></svg>
<svg width="8" height="9" style="left:779.4px;top:267.2px" viewBox="0 0 8 9"><path d="M0.4 1.6h7.2M2.8 1.4v-1h2.4v1" fill="none" stroke="#8a8a8a" stroke-width="0.9"/><path d="M1.1 2.4h5.8l-0.5 6.2h-4.8z" fill="#8a8a8a"/></svg>
<div class="a" style="left:655px;top:278.8px;width:145px;height:2.2px;background:#424242"></div>
<!-- layers panel -->
<div class="a" style="left:657px;top:281px;width:143px;height:15.5px;background:#424242"></div>
<div class="a" style="left:657px;top:281px;width:24px;height:16px;background:#535353"></div>
<div class="t" style="left:662.3px;top:284px;color:#f2f2f2;font-weight:bold;font-size:6.6px">图层</div>
<div class="t" style="left:687.3px;top:284px;color:#a6a6a6;font-size:6.6px">通道</div>
<div class="t" style="left:712px;top:284px;color:#a6a6a6;font-size:6.6px">路径</div>
<svg width="6" height="5" style="left:790px;top:286px" viewBox="0 0 6 5"><path d="M0 0.6h6M0 2.1h6M0 3.6h6" stroke="#9a9a9a" stroke-width="0.9"/></svg>
<div class="a" style="left:658.8px;top:301.2px;width:50.4px;height:10.4px;background:#3c3c3c;border:1px solid #474747;border-radius:1px"></div>
<svg width="6" height="7" style="left:662.2px;top:302.8px" viewBox="0 0 6 7"><circle cx="3.5" cy="2.5" r="1.9" fill="none" stroke="#e6e6e6" stroke-width="1"/><path d="M2.2 3.9L0.5 6.2" stroke="#e6e6e6" stroke-width="1.2"/></svg>
<div class="t" style="left:671.5px;top:301.4px;color:#e2e2e2">类型</div>
<svg width="5" height="4" style="left:702.5px;top:304.8px" viewBox="0 0 5 4"><path d="M0.5 0.8l2 2 2-2" fill="none" stroke="#bdbdbd" stroke-width="0.8"/></svg>
<svg width="8" height="7" style="left:717.6px;top:303px" viewBox="0 0 8 7"><rect x="0.5" y="0.5" width="7" height="6" rx="0.6" fill="none" stroke="#dcdcdc" stroke-width="1"/><path d="M1.2 5.6l1.8-2.4 1.3 1.4 1-1 1.5 2z" fill="#dcdcdc"/></svg>
<svg width="8" height="8" style="left:732px;top:302.5px" viewBox="0 0 8 8"><circle cx="4" cy="4" r="3.3" fill="none" stroke="#dcdcdc" stroke-width="1"/><path d="M4 0.7a3.3 3.3 0 0 0 0 6.6z" fill="#dcdcdc"/></svg>
<div class="t" style="left:747.6px;top:301.3px;color:#dcdcdc;font-family:'Liberation Serif',serif;font-weight:bold;font-size:8.5px">T</div>
<svg width="9" height="8" style="left:760px;top:302.5px" viewBox="0 0 9 8"><rect x="1.7" y="1.5" width="5.6" height="5" fill="none" stroke="#dcdcdc" stroke-width="0.9"/><path d="M0.5 0.3h2.4v2.4h-2.4zM6.1 0.3h2.4v2.4h-2.4zM0.5 5.3h2.4v2.4h-2.4zM6.1 5.3h2.4v2.4h-2.4z" fill="#dcdcdc"/></svg>
<svg width="7" height="9" style="left:775.3px;top:302px" viewBox="0 0 7 9"><path d="M0.5 0.5h4l2 2v6h-6z" fill="none" stroke="#dcdcdc" stroke-width="0.9"/><rect x="2" y="4.2" width="3" height="2.8" fill="#dcdcdc"/></svg>
<div class="a" style="left:793.2px;top:302.2px;width:3.6px;height:3.6px;border-radius:2px;background:#ededed"></div>
<div class="a" style="left:793.2px;top:302.2px;width:3.6px;height:9px;border-radius:2px;border:0.5px solid #3c3c3c"></div>
<div class="a" style="left:658.8px;top:317.7px;width:68.6px;height:11px;background:#3c3c3c;border:1px solid #474747;border-radius:1px"></div>
<div class="t" style="left:663.3px;top:318.2px;color:#e2e2e2">正常</div>
<svg width="5" height="4" style="left:720.8px;top:321.5px" viewBox="0 0 5 4"><path d="M0.5 0.8l2 2 2-2" fill="none" stroke="#bdbdbd" stroke-width="0.8"/></svg>
<div class="t" style="left:732.5px;top:318.2px;color:#dadada">不透明度:</div>
<div class="a" style="left:765px;top:317.7px;width:22px;height:11px;background:#3c3c3c;border:1px solid #474747;border-radius:1px"></div>
<div class="t" style="left:767.4px;top:318.3px;color:#e6e6e6">100%</div>
<div class="a" style="left:789.7px;top:317.7px;width:8.8px;height:11px;background:#3c3c3c;border:1px solid #474747;border-radius:1px"></div>
<svg width="5" height="4" style="left:791.6px;top:321.5px" viewBox="0 0 5 4"><path d="M0.5 0.8l2 2 2-2" fill="none" stroke="#bdbdbd" stroke-width="0.8"/></svg>
<div class="t" style="left:658.8px;top:333.8px;color:#dadada">锁定:</div>
<svg width="7" height="7" style="left:682.8px;top:335.6px" viewBox="0 0 7 7"><rect x="0.4" y="0.4" width="6.2" height="6.2" fill="none" stroke="#bdbdbd" stroke-width="0.7"/><path d="M0.4 0.4h2v2h-2zM4.4 0.4h2.2v2h-2.2zM2.4 2.4h2v2h-2zM0.4 4.4h2v2.2h-2zM4.4 4.4h2.2v2.2h-2.2z" fill="#bdbdbd"/></svg>
<svg width="8" height="9" style="left:695.4px;top:334.4px" viewBox="0 0 8 9"><path d="M7.4 0.6l-4 4.4" stroke="#c4c4c4" stroke-width="1.2" stroke-linecap="round"/><path d="M3 5.2c-1.2 0.1-1.4 1-1.6 1.7-0.1 0.5-0.5 0.9-1.1 1.1 1.2 0.3 2.6 0.1 3.3-0.7 0.5-0.6 0.4-1.3-0.6-2.1z" fill="#c4c4c4"/></svg>
<svg width="8" height="8" style="left:707.4px;top:335px" viewBox="0 0 12 12"><path d="M6 0.3l1.9 2.2h-1.3v2.9h2.9v-1.3l2.2 1.9-2.2 1.9v-1.3h-2.9v2.9h1.3l-1.9 2.2-1.9-2.2h1.3v-2.9h-2.9v1.3l-2.2-1.9 2.2-1.9v1.3h2.9v-2.9h-1.3z" fill="#dcdcdc"/></svg>
<svg width="9" height="8" style="left:720px;top:335px" viewBox="0 0 9 8" fill="none" stroke="#dcdcdc" stroke-width="0.9"><path d="M2 0v8M0 1.8h7.2v5.8M0 6h9"/><path d="M5.5 0.4l2.6 2.6" stroke-width="0.8"/></svg>
<svg width="7" height="8" style="left:733.8px;top:334.8px" viewBox="0 0 7 8"><path d="M1.7 3.6v-1.3a1.8 1.8 0 0 1 3.6 0v1.3" fill="none" stroke="#dcdcdc" stroke-width="1"/><rect x="0.4" y="3.5" width="6.2" height="4.2" rx="0.5" fill="#dcdcdc"/></svg>
<div class="t" style="left:746.9px;top:333.8px;color:#dadada">填充:</div>
<div class="a" style="left:765px;top:333.3px;width:22px;height:11px;background:#3c3c3c;border:1px solid #474747;border-radius:1px"></div>
<div class="t" style="left:767.4px;top:333.9px;color:#e6e6e6">100%</div>
<div class="a" style="left:789.7px;top:333.3px;width:8.8px;height:11px;background:#3c3c3c;border:1px solid #474747;border-radius:1px"></div>
<svg width="5" height="4" style="left:791.6px;top:337.1px" viewBox="0 0 5 4"><path d="M0.5 0.8l2 2 2-2" fill="none" stroke="#bdbdbd" stroke-width="0.8"/></svg>
<!-- layer rows -->
<div class="a" style="left:659px;top:347.6px;width:132px;height:14px;background:#4e4e4e"></div>
<div class="a" style="left:672.5px;top:347.6px;width:118.5px;height:14px;background:#696969"></div>
<div class="a" style="left:659px;top:361.8px;width:132px;height:13.6px;background:#585858"></div>
<svg width="9" height="6" style="left:661.3px;top:351.8px" viewBox="0 0 9 6"><path d="M0.3 3c1.2-1.8 2.6-2.6 4.2-2.6s3 0.8 4.2 2.6c-1.2 1.8-2.6 2.6-4.2 2.6s-3-0.8-4.2-2.6z" fill="#dcdcdc"/><circle cx="4.5" cy="3" r="1.4" fill="#4a4a4a"/></svg>
<svg width="9" height="6" style="left:661.3px;top:366.2px" viewBox="0 0 9 6"><path d="M0.3 3c1.2-1.8 2.6-2.6 4.2-2.6s3 0.8 4.2 2.6c-1.2 1.8-2.6 2.6-4.2 2.6s-3-0.8-4.2-2.6z" fill="#dcdcdc"/><circle cx="4.5" cy="3" r="1.4" fill="#4a4a4a"/></svg>
<div class="a" style="left:676.4px;top:349px;width:16.6px;height:11.4px;background:#fff;border:0.6px solid #9a9a9a"></div>
<svg width="9" height="9" style="left:681px;top:350px" viewBox="0 0 9 9"><circle cx="4.3" cy="4.6" r="3.8" fill="#161616"/><circle cx="4.6" cy="4.2" r="1.7" fill="#fff"/><circle cx="4.4" cy="4.4" r="0.8" fill="#161616"/><path d="M5 4.4l4-0.8v-1.6l-3 0.3z" fill="#fff"/></svg>
<svg width="8" height="8" style="left:688.4px;top:354.6px" viewBox="0 0 8 8"><rect x="0.4" y="0.4" width="7" height="7" fill="#d8d8d8" stroke="#555" stroke-width="0.6"/><rect x="2" y="2" width="3.8" height="3.8" fill="none" stroke="#444" stroke-width="0.7"/></svg>
<div class="t" style="left:701px;top:349.6px;color:#f4f4f4">形状 1</div>
<div class="a" style="left:676.4px;top:364px;width:16.6px;height:10.4px;background:#fff;border:0.6px solid #9a9a9a"></div>
<div class="t" style="left:701px;top:363.6px;color:#e8e8e8;font-style:italic">背景</div>
<svg width="6" height="7" style="left:775px;top:366.6px" viewBox="0 0 7 8"><path d="M1.7 3.6v-1.3a1.8 1.8 0 0 1 3.6 0v1.3" fill="none" stroke="#dcdcdc" stroke-width="0.9"/><rect x="0.6" y="3.6" width="5.8" height="4" rx="0.5" fill="none" stroke="#dcdcdc" stroke-width="0.9"/></svg>
<!-- smudge + watermark -->
<svg width="160" height="60" style="left:645px;top:355px" viewBox="645 355 160 60"><defs><filter id="bl" x="-5%" y="-10%" width="110%" height="120%"><feGaussianBlur stdDeviation="0.7"/></filter></defs><path filter="url(#bl)" fill="#505050" d="M650 386c0-6 3-10.500 9-10.500H714c3 0 4-2.500 5-7c1-5 3-7.200 7-7.200h26c5 0 7 3 9 8c1.500 4.500 4 7.700 8 7.700h18c5 0 7.500 3 7.500 8V405c0 4-2 6.500-6 6.500H660c-6 0-10-6-10-12z"/></svg>
<svg width="100" height="40" style="left:660px;top:338px" viewBox="660 338 100 40"><g fill="#c9c9c9" opacity="0.92"><ellipse cx="678.5" cy="347" rx="5.2" ry="6.2"/><ellipse cx="690.8" cy="347.900" rx="5.200" ry="6"/><ellipse cx="668.100" cy="358.500" rx="5.400" ry="6.400" transform="rotate(-10 668.100 358.500)"/><ellipse cx="699" cy="360.800" rx="5.200" ry="6.400" transform="rotate(8 699 360.800)"/><path d="M667.300 374.600c2.500-3 6-7 9-10.500c3-3.600 5.500-5.600 8.200-5.600c2.700 0 5 2 7.500 5c3 3.600 5.500 7.500 7.600 11.100z"/><path d="M706.500 370.500c1.500-3.500 3.500-6.200 7.200-8l1 0.600c-2.300 2.700-3.500 5-4.200 7.600zM715.800 364.800c3-1.800 6.200-2.600 9.800-2.800c-2.300 1.600-5.800 3.200-9 4.200z" opacity="0.8"/></g></svg>
<div class="a" style="left:676.4px;top:364px;width:16.6px;height:10.4px;background:#fff"></div>
<!-- green scroll artifact -->
<div class="a" style="left:794px;top:387.4px;width:5.2px;height:33px;border-radius:2.6px;background:linear-gradient(to bottom,#1d2a20 0%,#22382a 42%,#3d8f4e 60%,#46a358 100%);border:0.8px solid #20261f"></div>
<!-- bottom icons -->
<svg width="8" height="5" style="left:680.2px;top:416.5px" viewBox="0 0 9 5" fill="none" stroke="#8c8c8c" stroke-width="0.9"><circle cx="2.4" cy="2.5" r="1.7"/><circle cx="6.6" cy="2.5" r="1.7"/></svg>
<div class="t" style="left:696.3px;top:412.8px;color:#e0e0e0;font-family:'Liberation Serif',serif;font-style:italic;font-weight:bold;font-size:8.5px;letter-spacing:-0.3px">fx</div>
<svg width="9" height="7" style="left:711.6px;top:415.2px" viewBox="0 0 9 7"><rect x="0" y="0" width="9" height="7" rx="0.6" fill="#e0e0e0"/><circle cx="4.5" cy="3.5" r="2.1" fill="#484848"/></svg>
<svg width="8" height="8" style="left:728px;top:414.8px" viewBox="0 0 8 8"><circle cx="4" cy="4" r="3.3" fill="none" stroke="#e0e0e0" stroke-width="1"/><path d="M1.7 6.3a3.3 3.3 0 0 0 4.6-4.600z" fill="#e0e0e0"/></svg>
<svg width="9" height="7" style="left:743.4px;top:415.2px" viewBox="0 0 9 7"><path d="M0.2 0.8h3.2l0.9 1h4.5v5h-8.600z" fill="#e0e0e0"/></svg>
<svg width="8" height="8" style="left:759.6px;top:414.8px" viewBox="0 0 8 8"><path d="M0.5 0.5h7v7h-4.300l-2.700-2.700z" fill="none" stroke="#e0e0e0" stroke-width="1"/><path d="M0.5 4.800h2.700v2.700" fill="none" stroke="#e0e0e0" stroke-width="0.9"/></svg>
<svg width="8" height="9" style="left:775px;top:414.2px" viewBox="0 0 8 9"><path d="M0.400 1.600h7.200M2.800 1.400v-1h2.400v1" fill="none" stroke="#dcdcdc" stroke-width="0.9"/><path d="M1.100 2.400h5.800l-0.500 6.200h-4.800z" fill="#dcdcdc"/></svg>
<svg width="3" height="3" style="left:704.5px;top:421.500px" viewBox="0 0 3 3"><path d="M2.6 0.4v2.200h-2.200z" fill="#c4c4c4"/></svg>
<svg width="3" height="3" style="left:736px;top:421.500px" viewBox="0 0 3 3"><path d="M2.6 0.4v2.200h-2.200z" fill="#c4c4c4"/></svg>
</div>
</body>
</html>
